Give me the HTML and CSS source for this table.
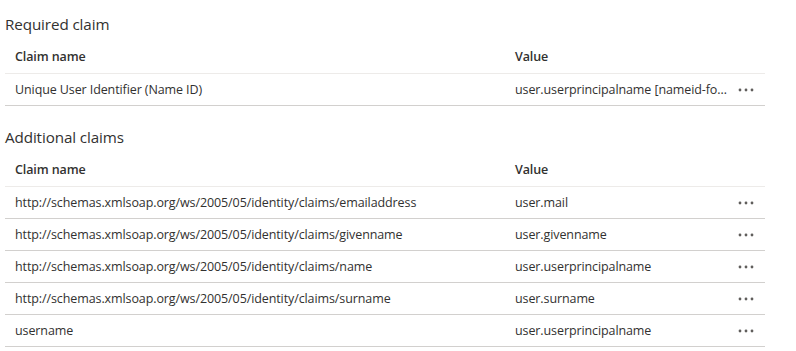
FILE: index.html
```html
<!DOCTYPE html>
<html lang="en">
<head>
    <meta charset="UTF-8">
    <title>Attributes &amp; Claims</title>
    <link rel="stylesheet" href="styles.css">
</head>
<body>
    <!-- Required claim -->
    <div class="section">
        <h2>Required claim</h2>
        <div class="claims">
            <div class="row head">
                <div class="cell">Claim name</div>
                <div class="cell">Value</div>
                <div class="cell"></div>
            </div>
            <div class="row">
                <div class="cell">Unique User Identifier (Name ID)</div>
                <div class="cell">user.userprincipalname [nameid-format:emailAddress]</div>
                <div class="cell more"><svg width="16" height="4" viewBox="0 0 16 4"><circle cx="2" cy="2" r="1.4"/><circle cx="8" cy="2" r="1.4"/><circle cx="14" cy="2" r="1.4"/></svg></div>
            </div>
        </div>
    </div>

    <!-- Additional claims -->
    <div class="section">
        <h2>Additional claims</h2>
        <div class="claims">
            <div class="row head">
                <div class="cell">Claim name</div>
                <div class="cell">Value</div>
                <div class="cell"></div>
            </div>
            <div class="row">
                <div class="cell">http://schemas.xmlsoap.org/ws/2005/05/identity/claims/emailaddress</div>
                <div class="cell">user.mail</div>
                <div class="cell more"><svg width="16" height="4" viewBox="0 0 16 4"><circle cx="2" cy="2" r="1.4"/><circle cx="8" cy="2" r="1.4"/><circle cx="14" cy="2" r="1.4"/></svg></div>
            </div>
            <div class="row">
                <div class="cell">http://schemas.xmlsoap.org/ws/2005/05/identity/claims/givenname</div>
                <div class="cell">user.givenname</div>
                <div class="cell more"><svg width="16" height="4" viewBox="0 0 16 4"><circle cx="2" cy="2" r="1.4"/><circle cx="8" cy="2" r="1.4"/><circle cx="14" cy="2" r="1.4"/></svg></div>
            </div>
            <div class="row">
                <div class="cell">http://schemas.xmlsoap.org/ws/2005/05/identity/claims/name</div>
                <div class="cell">user.userprincipalname</div>
                <div class="cell more"><svg width="16" height="4" viewBox="0 0 16 4"><circle cx="2" cy="2" r="1.4"/><circle cx="8" cy="2" r="1.4"/><circle cx="14" cy="2" r="1.4"/></svg></div>
            </div>
            <div class="row">
                <div class="cell">http://schemas.xmlsoap.org/ws/2005/05/identity/claims/surname</div>
                <div class="cell">user.surname</div>
                <div class="cell more"><svg width="16" height="4" viewBox="0 0 16 4"><circle cx="2" cy="2" r="1.4"/><circle cx="8" cy="2" r="1.4"/><circle cx="14" cy="2" r="1.4"/></svg></div>
            </div>
            <div class="row">
                <div class="cell">username</div>
                <div class="cell">user.userprincipalname</div>
                <div class="cell more"><svg width="16" height="4" viewBox="0 0 16 4"><circle cx="2" cy="2" r="1.4"/><circle cx="8" cy="2" r="1.4"/><circle cx="14" cy="2" r="1.4"/></svg></div>
            </div>
        </div>
    </div>
</body>
</html>
```

FILE: styles.css
```css
body {
    font-family: "Open Sans", "Noto Sans", sans-serif;
    font-size: 12.5px;
    letter-spacing: -0.1px;
    color: #323130;
    background-color: #fff;
    margin: 0;
    padding: 8px 5px 0 5px;
}

.section + .section {
    margin-top: 15px;
}

h2 {
    font-size: 15.2px;
    font-weight: normal;
    line-height: 32px;
    margin: 0;
}

.claims {
    width: 760px;
}

.row {
    display: grid;
    grid-template-columns: 500px 225px 35px;
    align-items: center;
    height: 32px;
    box-sizing: border-box;
    border-bottom: 1px solid #d2d0ce;
}

.row.head {
    height: 34px;
    font-weight: 600;
    border-bottom-color: #edebe9;
}

.cell {
    padding-left: 10px;
    white-space: nowrap;
    overflow: hidden;
    text-overflow: ellipsis;
}

.more {
    padding-left: 0;
    display: flex;
    align-items: center;
}

.more svg {
    fill: #605e5c;
    margin-left: 8px;
}
```
